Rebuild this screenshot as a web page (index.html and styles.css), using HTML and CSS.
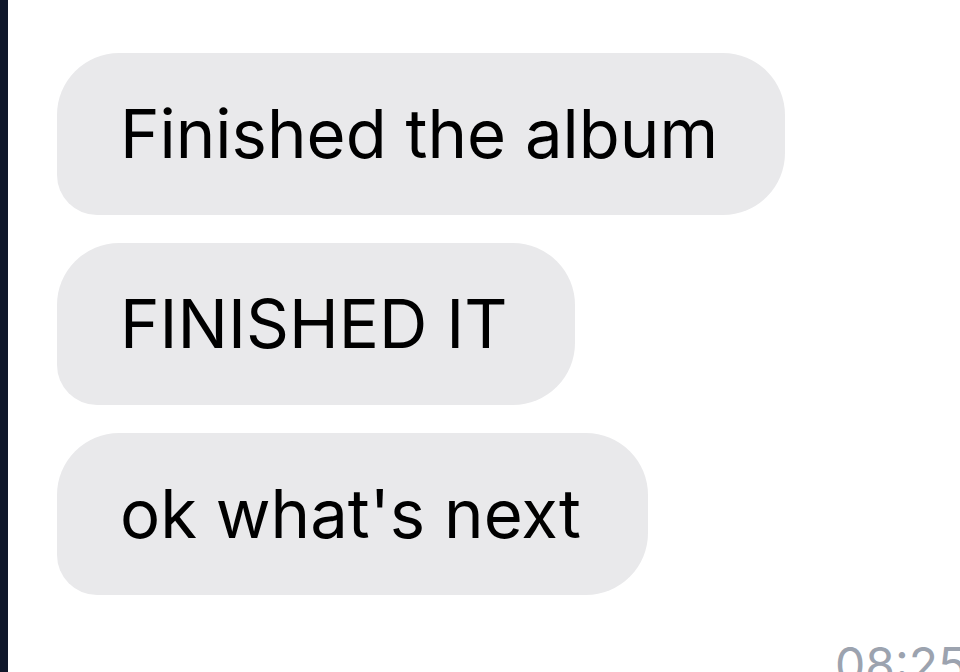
FILE: index.html
```html
<!DOCTYPE html>
<html>
<head>
<meta charset="utf-8">
<link rel="stylesheet" href="styles.css">
</head>
<body>
<div class="frame">
  <div class="thread">
    <div class="bubble">Finished the album</div>
    <div class="bubble">FINISHED IT</div>
    <div class="bubble">ok what's next</div>
  </div>
  <div class="meta"><span class="time">08:25</span></div>
</div>
</body>
</html>
```
FILE: styles.css
```css
html, body {
  margin: 0;
  padding: 0;
  background: #ffffff;
  overflow: hidden;
}
body {
  width: 960px;
  height: 672px;
  font-family: Inter, "Noto Sans", sans-serif;
}
.frame {
  height: 672px;
  box-sizing: border-box;
  border-left: 8px solid #0f172a;
  padding: 53px 0 0 49px;
  overflow: hidden;
}
.thread {
  display: flex;
  flex-direction: column;
  align-items: flex-start;
  gap: 28px;
}
.bubble {
  background: #e9e9eb;
  color: #000000;
  font-size: 67px;
  line-height: 162px;
  height: 162px;
  padding: 0 67px 0 63px;
  border-radius: 62px 62px 62px 40px;
  white-space: nowrap;
}
.meta {
  margin-top: 46px;
  padding-left: 778px;
  white-space: nowrap;
}
.time {
  font-size: 48px;
  color: #9ca3af;
  line-height: 1;
}
```
